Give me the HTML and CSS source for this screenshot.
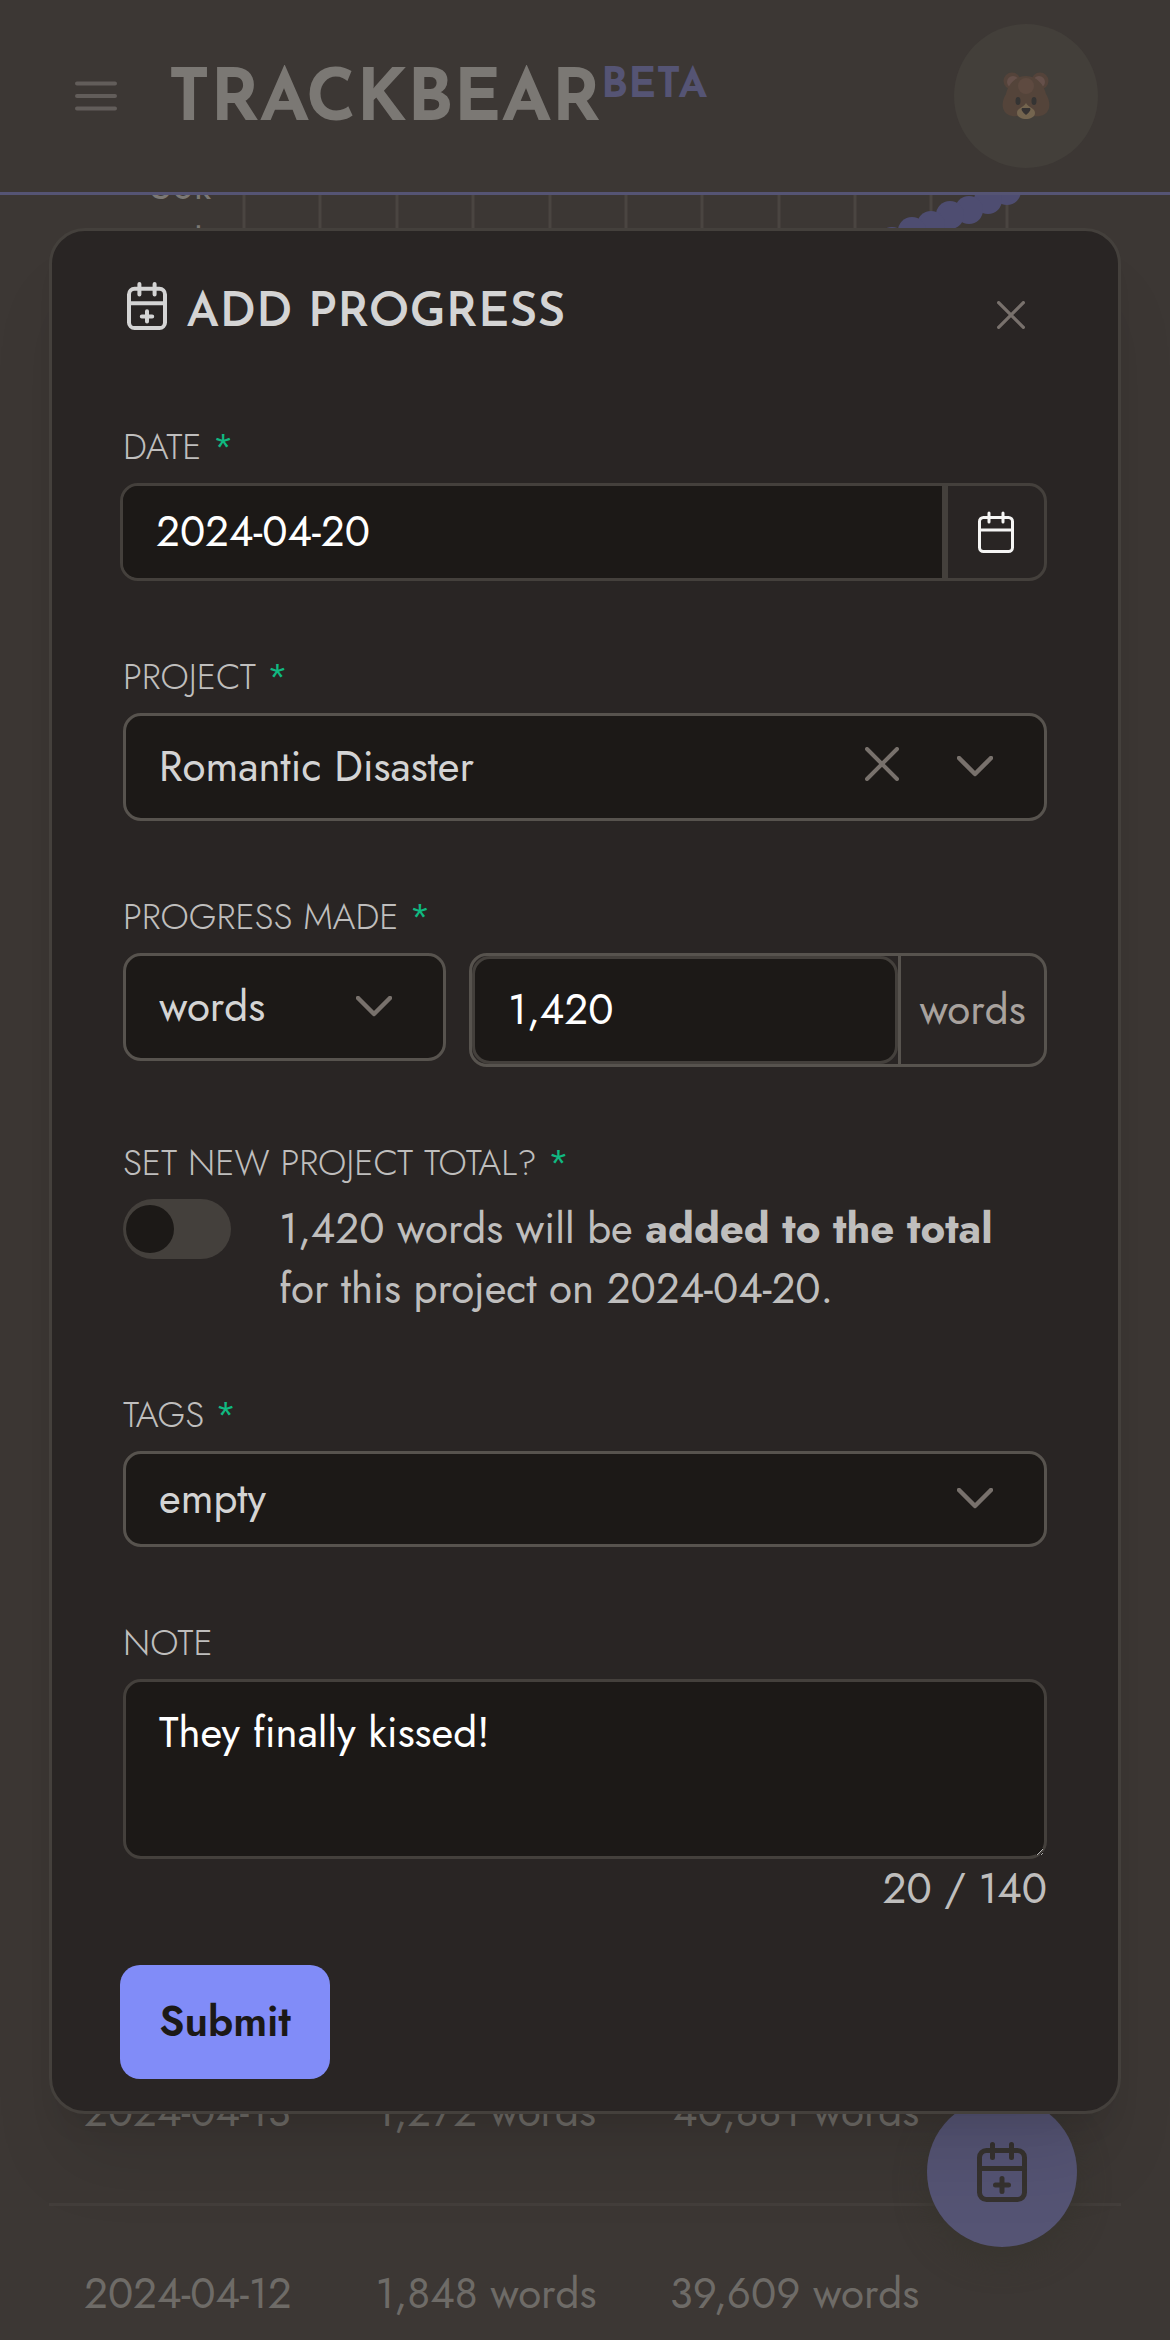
FILE: index.html
```html
<!DOCTYPE html>
<html lang="en">
<head>
<meta charset="utf-8">
<meta name="viewport" content="width=device-width, initial-scale=1">
<title>TrackBear - Add Progress</title>
<link rel="stylesheet" href="styles.css">
</head>
<body>
<svg class="sprite" aria-hidden="true">
  <symbol id="calendar-plus" viewBox="0 0 50 60">
    <g fill="none" stroke="currentColor" stroke-width="5" stroke-linecap="round">
      <rect x="2.500" y="8.500" width="45" height="49" rx="7"/>
      <path d="M2.500 26.500h45M15.500 2.500v13M34.500 2.500v13M25 36.500v13M18.500 43h13"/>
    </g>
  </symbol>
  <symbol id="calendar" viewBox="0 0 36 42">
    <g fill="none" stroke="currentColor" stroke-width="3" stroke-linecap="round">
      <rect x="1.500" y="6.500" width="33" height="34" rx="4"/>
      <path d="M1.500 19h33M11 2v9M25 2v9"/>
    </g>
  </symbol>
  <symbol id="times" viewBox="0 0 34 34">
    <path d="M2 2l30 30M32 2L2 32" fill="none" stroke="currentColor" stroke-width="4" stroke-linecap="round"/>
  </symbol>
  <symbol id="chevron" viewBox="0 0 36 22">
    <path d="M2 2l16 16L34 2" fill="none" stroke="currentColor" stroke-width="4.500" stroke-linecap="round" stroke-linejoin="round"/>
  </symbol>
</svg>

<div class="page">
  <header class="topbar">
    <button class="menu" type="button" aria-label="Menu">
      <svg viewBox="0 0 42 30"><path d="M2 2.500h38M2 15h38M2 27.500h38" stroke="currentColor" stroke-width="4" stroke-linecap="round"/></svg>
    </button>
    <a class="brand" href="#">TRACKBEAR<sup>BETA</sup></a>
    <button class="avatar" type="button" aria-label="Account">
      <svg viewBox="0 0 48 48">
        <circle cx="10" cy="9" r="8.500" fill="#54433a"/><circle cx="38" cy="9" r="8.500" fill="#54433a"/>
        <circle cx="11" cy="10" r="6" fill="#65504a"/><circle cx="37" cy="10" r="6" fill="#65504a"/>
        <path d="M24 4C13 4 6 13 4 22C1 27 0 32 1 36C3 43 9 45 17 44H31C39 45 45 43 47 36C48 32 47 27 44 22C42 13 35 4 24 4Z" fill="#54443a"/>
        <circle cx="24" cy="14" r="8" fill="#5e4a40"/>
        <path d="M24 31C21 36 15 36 15 41C15 45 20 47 24 47S33 45 33 41C33 36 27 36 24 31Z" fill="#74654f"/>
        <path d="M20 36H28Q30 38 24 43Q18 38 20 36Z" fill="#353232"/>
        <ellipse cx="16" cy="29" rx="2.500" ry="4" fill="#353433"/><ellipse cx="32" cy="29" rx="2.500" ry="4" fill="#353433"/>
      </svg>
    </button>
  </header>

  <main class="content">
    <svg class="chart" viewBox="0 0 1170 60" role="img" aria-label="Words over time">
      <path d="M244 0v60M320 0v60M397 0v60M473 0v60M550 0v60M626 0v60M702 0v60M779 0v60M855 0v60M931 0v60M1007 0v60" stroke="#4a4541" stroke-width="3"/>
      <g fill="#4e4d71">
        <circle cx="1007" cy="-4" r="14"/><circle cx="988" cy="5" r="14"/><circle cx="969" cy="15" r="14"/><circle cx="950" cy="20" r="14"/><circle cx="931" cy="30" r="14"/><circle cx="912" cy="36" r="14"/><circle cx="892" cy="46" r="14"/>
      </g>
      <g class="axis"><text x="211" y="4">50k</text><text x="211" y="60">45k</text></g>
    </svg>
    <table class="log">
      <tbody>
        <tr><td>2024-04-13</td><td>1,272 words</td><td>40,881 words</td><td></td></tr>
        <tr><td>2024-04-12</td><td>1,848 words</td><td>39,609 words</td><td></td></tr>
      </tbody>
    </table>
  </main>

  <button class="fab" type="button" aria-label="Add progress"><svg><use href="#calendar-plus"/></svg></button>
</div>

<div class="overlay">
  <section class="dialog" role="dialog" aria-modal="true" aria-labelledby="dialog-title">
    <header class="dialog-head">
      <h2 id="dialog-title"><svg><use href="#calendar-plus"/></svg><span>ADD PROGRESS</span></h2>
      <button class="icon-button close" type="button" aria-label="Close"><svg><use href="#times"/></svg></button>
    </header>

    <form class="form">
      <div class="field">
        <label for="date">DATE <span class="req">*</span></label>
        <div class="date-group">
          <input id="date" class="date-input" type="text" value="2024-04-20">
          <button type="button" class="date-button" aria-label="Choose date"><svg><use href="#calendar"/></svg></button>
        </div>
      </div>

      <div class="field">
        <label for="project">PROJECT <span class="req">*</span></label>
        <div class="select-box tall">
          <select id="project"><option>Romantic Disaster</option></select>
          <button class="icon-button clear" type="button" aria-label="Clear project"><svg><use href="#times"/></svg></button>
          <svg class="chevron"><use href="#chevron"/></svg>
        </div>
      </div>

      <div class="field">
        <label for="amount">PROGRESS MADE <span class="req">*</span></label>
        <div class="progress-row">
          <div class="select-box tall">
            <select aria-label="Unit"><option>words</option></select>
            <svg class="chevron"><use href="#chevron"/></svg>
          </div>
          <div class="amount-group">
            <input id="amount" type="text" inputmode="numeric" value="1,420">
            <span class="unit">words</span>
          </div>
        </div>
      </div>

      <div class="field">
        <label for="set-total">SET NEW PROJECT TOTAL? <span class="req">*</span></label>
        <div class="toggle-row">
          <input id="set-total" class="toggle" type="checkbox" role="switch">
          <p>1,420 words will be <strong>added to the total</strong> for this project on 2024-04-20.</p>
        </div>
      </div>

      <div class="field">
        <label for="tags">TAGS <span class="req">*</span></label>
        <div class="select-box">
          <select id="tags"><option>empty</option></select>
          <svg class="chevron"><use href="#chevron"/></svg>
        </div>
      </div>

      <div class="field">
        <label for="note">NOTE</label>
        <textarea id="note" maxlength="140">They finally kissed!</textarea>
        <div class="counter">20 / 140</div>
      </div>

      <button class="submit" type="submit">Submit</button>
    </form>
  </section>
</div>
</body>
</html>
```
FILE: styles.css
```css
:root {
  --page: #3c3734;
  --accent-dim: #555474;
  --surface: #292524;
  --well: #1c1917;
  --line: #44403c;
  --line-strong: #57534e;
  --icon: #78716c;
  --text: #d4d4d4;
  --label: #bfbebd;
  --heading-font: "Josefin Sans", Jost, Lato, sans-serif;
}

* { box-sizing: border-box; }

body {
  margin: 0;
  background: var(--page);
  color: var(--label);
  font-family: Jost, Lato, "Open Sans", sans-serif;
  font-size: 42px;
  line-height: 60px;
}

button, input, select, textarea {
  margin: 0;
  font: inherit;
  color: inherit;
}

button {
  padding: 0;
  border: 0;
  background: none;
}

svg { display: block; }
.sprite { position: absolute; width: 0; height: 0; }

/* Page behind the dialog */
.page {
  position: relative;
  display: flex;
  flex-direction: column;
  height: 100vh;
  overflow: hidden;
}

.topbar {
  display: flex;
  align-items: center;
  height: 195px;
  flex: none;
  padding: 0 72px 0 75px;
  border-bottom: 3px solid var(--accent-dim);
}

.menu { color: #625d5a; }
.menu svg { width: 42px; height: 30px; }

.brand {
  display: flex;
  align-items: flex-start;
  margin-left: 51px;
  padding-top: 12px;
  color: #7b7874;
  font-family: var(--heading-font);
  font-size: 72px;
  font-weight: 700;
  line-height: 84px;
  text-decoration: none;
}

.brand sup {
  color: var(--accent-dim);
  font-size: 42px;
  line-height: 54px;
}

.avatar {
  display: grid;
  place-items: center;
  width: 144px;
  height: 144px;
  margin-left: auto;
  border-radius: 50%;
  background: #433f3a;
}
.avatar svg { width: 48px; height: 48px; }

.content {
  display: flex;
  flex: 1;
  flex-direction: column;
  justify-content: space-between;
}

.chart { width: 100%; overflow: hidden; }
.axis { fill: #7b7874; font-size: 38px; text-anchor: end; }

.log {
  width: calc(100% - 98px);
  margin: 0 49px;
  border-collapse: collapse;
  table-layout: fixed;
  color: #6e6b67;
}
.log td { height: 183px; padding: 0 37px; border-bottom: 3px solid #433e3b; text-align: right; white-space: nowrap; }
.log td:nth-child(1) { width: 27%; padding: 0 0 0 35px; text-align: left; }
.log td:nth-child(2) { width: 27%; }
.log td:nth-child(3) { width: 31%; padding-right: 41px; }
.log tr:last-child td { height: 136px; padding-top: 42px; border: 0; }

.fab {
  position: absolute;
  right: 93px;
  bottom: 93px;
  display: grid;
  place-items: center;
  width: 150px;
  height: 150px;
  border-radius: 50%;
  background: var(--accent-dim);
  box-shadow: 0 12px 30px #38352f;
  color: #36322f;
}
.fab svg { width: 50px; height: 60px; }

/* Dialog */
.overlay {
  position: absolute;
  inset: 0;
  display: flex;
  align-items: flex-start;
  padding: 228px 49px 0;
}

.dialog {
  flex: 1;
  padding: 45px 71px 32px;
  border: 3px solid var(--line);
  border-radius: 36px;
  background: var(--surface);
  box-shadow: 0 60px 75px -15px rgb(0 0 0 / 10%), 0 24px 30px -18px rgb(0 0 0 / 10%);
}

.dialog-head {
  display: flex;
  align-items: center;
  justify-content: space-between;
  height: 72px;
  margin-bottom: 73px;
  padding: 0 22px 0 4px;
}

.dialog h2 {
  display: flex;
  align-items: center;
  gap: 19px;
  margin: 0;
  color: var(--text);
  font-family: var(--heading-font);
  font-size: 48px;
  font-weight: 600;
}
.dialog h2 svg { width: 40px; height: 48px; margin-bottom: 12px; }
.dialog h2 span { padding-top: 4px; }

.icon-button { color: var(--icon); }
.icon-button svg { width: 34px; height: 34px; }
.close { padding-top: 6px; }
.close svg { width: 28px; height: 28px; }

.form {
  display: flex;
  flex-direction: column;
  gap: 70px;
}

.field {
  display: flex;
  flex-direction: column;
}

label {
  margin-bottom: 12px;
  font-size: 36px;
  font-weight: 300;
  line-height: 50px;
}
.req { color: #10b981; font-weight: 400; }

.date-group {
  display: flex;
  height: 98px;
  margin-left: -3px;
  border: 3px solid var(--line);
  border-radius: 18px;
  overflow: hidden;
}
.date-input {
  flex: 1;
  min-width: 0;
  padding: 0 33px;
  border: 0;
  border-right: 6px solid var(--line);
  background: var(--well);
  color: #fff;
}
.date-button {
  display: grid;
  place-items: center;
  width: 96px;
  color: #f5f5f4;
}
.date-button svg { width: 36px; height: 42px; }

.select-box {
  position: relative;
  height: 96px;
}
.select-box.tall { height: 108px; }
.select-box select {
  width: 100%;
  height: 100%;
  padding: 0 33px;
  appearance: none;
  border: 3px solid var(--line-strong);
  border-radius: 18px;
  background: var(--well);
  color: var(--text);
}
.chevron {
  position: absolute;
  top: calc(50% - 11px);
  right: 54px;
  width: 36px;
  height: 22px;
  color: var(--icon);
  pointer-events: none;
}
.clear {
  position: absolute;
  top: 34px;
  right: 148px;
}

.progress-row {
  display: grid;
  grid-template-columns: minmax(0, 323fr) minmax(0, 578fr);
  gap: 23px;
}
.amount-group {
  display: flex;
  height: 114px;
  border: 3px solid var(--line-strong);
  border-radius: 18px;
}
.amount-group input {
  flex: 1;
  min-width: 0;
  padding: 0 33px;
  border: 3px solid var(--line);
  border-radius: 18px;
  background: var(--well);
  color: #fff;
}
.unit {
  display: grid;
  place-items: center;
  width: 146px;
  border-left: 3px solid var(--line-strong);
  color: #a8a29e;
}

.toggle-row {
  display: flex;
  gap: 48px;
}
.toggle-row p { flex: 1; margin: 0; }
.toggle {
  flex: none;
  width: 108px;
  height: 60px;
  padding: 6px 3px;
  appearance: none;
  border-radius: 30px;
  background: var(--line);
}
.toggle::before {
  content: "";
  display: block;
  width: 48px;
  height: 48px;
  border-radius: 50%;
  background: var(--well);
}

textarea {
  height: 180px;
  padding: 21px 33px;
  border: 3px solid var(--line);
  border-radius: 18px;
  background: var(--well);
  color: #fff;
  resize: vertical;
}
.counter { text-align: right; }

.submit {
  align-self: flex-start;
  width: 210px;
  height: 114px;
  margin: -24px 0 0 -3px;
  border-radius: 20px;
  background: #818cf8;
  color: var(--well);
  font-weight: 600;
}
```
